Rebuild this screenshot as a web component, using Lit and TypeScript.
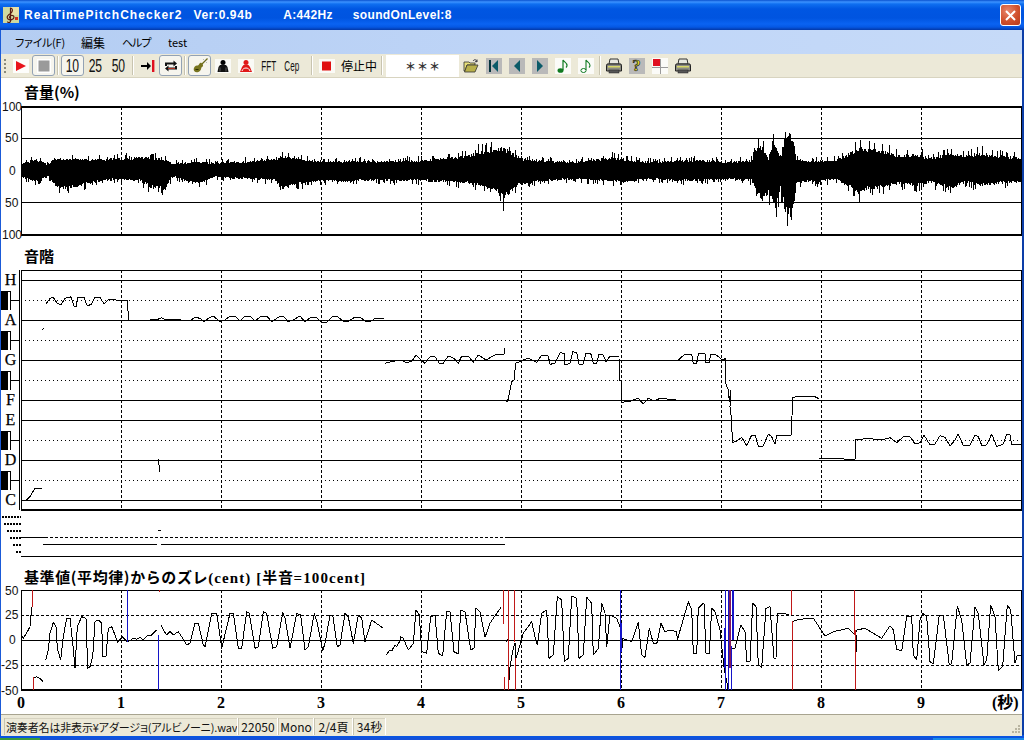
import { LitElement, html, css, svg } from "lit";
import { customElement } from "lit/decorators.js";

type Pt = number[];
const z = (ox: number, oy: number, a: number[]): Pt[] => {
  const r: Pt[] = [];
  for (let i = 0; i < a.length; i += 2) r.push([+(ox + a[i] / 3).toFixed(1), +(oy + a[i + 1] / 3).toFixed(1)]);
  return r;
};
const P = (...s: Pt[][]) => s.flat().map((p) => p.join(",")).join(" ");

const pitchTraces: string[] = [
  P(z(0, 240, [137,193,150,175,160,172,172,190,182,195,195,175,212,170,222,198,230,198,232,172,252,172,262,198,275,192,285,172,300,172,312,192,325,180,340,177,355,182,383,182,385,240,388,243])),
  P(z(0, 240, [127,268,131,265])),
  P(z(0, 240, [450,239,470,239,485,233,495,238,540,239,555,243,570,242,585,232,600,235,612,245,625,235,640,228,660,245,675,240,690,228,705,228,720,243,735,228,750,228,765,243,785,228,800,228,815,245,835,232,850,228,865,245,880,240,900,228]),
    [[305,322],[311,317],[316,317],[321,322],[327,322],[333,316],[338,317],[343,321],[349,321],[355,317],[360,317],[365,321],[371,321],[376,318],[384,319]]),
  P(z(380, 330, [15,100,30,96,60,90,78,97,95,95,108,75,125,92,135,100,150,80,165,80,178,100,190,100,205,78,222,85,235,100,245,78,265,78,280,97,295,75,318,90,345,75,372,72,373,55])),
  P(z(380, 330, [378,213,383,213,395,155,402,150,407,100,425,92,445,84,470,97,485,75,505,78,510,103,525,100,540,68,552,70,555,105,570,100,578,65,590,68,597,103,610,102,618,70,632,70,640,100,650,100,657,72,670,75,678,95,690,78,717,80,718,150,723,150,723,218,745,213,752,213,775,205,790,222,805,205,822,213,840,205,860,207,888,208])),
  P(z(380, 330, [895,90,915,72,935,72,940,100,950,100,955,72]),
    z(700, 340, [0,40,15,42,18,68,28,68,32,42,45,42,65,58,72,60,75,55,75,125,85,150,88,185,92,150,90,200,95,240,97,307,107,305,125,292,140,317,155,285,165,285,175,318,190,318,205,282,215,290,225,313,230,287,275,285,276,228,278,172,290,170,345,170,358,177])),
  P(z(700, 340, [358,355,465,358,468,298,510,296,545,300,570,293,590,308,610,290,630,290,645,312,660,308,672,285,690,315,705,312,720,287,735,292,750,318,765,300,775,282,790,316,810,316,825,285,835,290,845,316,860,315,875,282,890,320,910,312,920,282,930,285,935,315,965,312])),
  P(z(0, 420, [65,240,80,240,90,230,105,205,125,205])),
  P(z(0, 420, [475,118,478,140,480,155])),
];

const centTraces: string[] = [
  P(z(0, 580, [65,165,70,175,85,150,90,140,95,80])),
  P(z(0, 580, [100,295,110,290,120,295,130,305])),
  P(z(0, 580, [137,240,145,210,150,160,160,127,168,140,172,205,182,240,190,170,200,115,210,115,220,205,225,265,232,140,245,110,258,115,263,265,270,260,278,230,285,125,295,120,305,130,308,230,318,228,325,145,335,140,345,165,352,187,368,170,380,185,385,185,400,175,410,178,420,172,430,180,445,165,455,165,470,150])),
  P(z(0, 580, [483,135,490,150,500,165,510,155,520,165,535,155,545,170,560,195,570,190,585,130,595,130,610,195,615,200,635,100,650,100,665,205,690,100,700,100,715,205,725,205,740,95,748,100,765,205,775,200,790,95,800,100,818,205,830,200,848,98,855,115,870,205,890,100,902,105,915,210,925,200,943,100,952,130,968,212,975,190,990,105,998,105,1012,200,1020,195,1035,100,1045,110,1060,190,1075,105,1085,115,1095,185,1115,120,1150,145])),
  P(z(0, 580, [1158,225,1170,210,1175,213,1185,195,1190,200,1200,182]),
    z(400, 580, [0,170,10,175,25,210,40,190,48,90,58,105,65,215,80,220,92,110,105,105,115,220,128,228,140,95,150,95,162,215,175,222,182,90,195,95,212,210,222,205,228,85,240,95,255,172,270,130,280,115,303,82])),
  P(z(400, 580, [318,185,325,178])),
  P(z(400, 580, [325,330,330,260,340,205,345,190,345,245,360,195,370,160,395,125,405,170,412,195,425,100,440,90,447,235,460,225,472,50,485,60,493,245,505,235,515,48,530,55,537,235,550,225,560,52,575,70,580,225,595,205,605,70,615,100,620,200,630,105,650,115,660,140,665,215,668,175,680,180,695,185,715,128,725,225,735,232,748,145,760,190,770,192,783,130,795,155,810,150,830,155,832,180,865,65,875,90,880,220,890,222,895,85,910,70]),
    z(700, 580, [12,72,18,220,28,222,35,85,45,95,60,150,72,262,85,330])),
  P(z(700, 580, [95,205,105,205,122,135,135,155,140,245,150,245,158,70,168,80,175,255,185,262,198,85,210,80,222,235,228,235,232,100,268,103])),
  P(z(700, 580, [278,125,295,118,340,115,350,130,375,168,400,155,445,145,465,165,470,150,495,145,545,175,570,137,580,150,590,208,605,213,620,110,635,110,640,225,650,240,660,120,668,100,680,110,690,245,700,252,718,105,730,105,748,255,755,250,772,78,785,120,800,255,810,250,825,82,835,100,852,255,860,240,872,75,885,110,895,272,908,258,922,75,932,90,945,250,952,225,965,228])),
  P(z(700, 580, [468,165,468,215])),
];

const RED = "#c01818";
const BLUE = "#1414c8";
const PUR = "#801860";
const centBars: [number, number, number, string, number][] = [
  [32.5, 590, 607, RED, 1], [33.5, 677, 690, RED, 1], [127.5, 590, 642, BLUE, 1], [158.5, 635, 690, BLUE, 1], [159.5, 590, 592, RED, 1],
  [503.5, 590, 624, RED, 1], [504.5, 677, 690, RED, 1], [508.5, 590, 639, RED, 1], [508.5, 639, 690, RED, 1], [514.5, 590, 642, RED, 1], [515.5, 658, 690, RED, 1],
  [620.5, 590, 690, BLUE, 1], [620.5, 623, 652, BLUE, 2],
  [725.5, 590, 690, BLUE, 1], [724.5, 628, 668, BLUE, 2], [728.5, 590, 690, BLUE, 1], [729.5, 590, 668, PUR, 2],
  [732.5, 590, 640, BLUE, 2], [731.5, 646, 690, BLUE, 1],
  [791.5, 590, 615, RED, 1], [792.5, 621, 690, RED, 1], [854.5, 590, 635, RED, 1], [855.5, 630, 690, RED, 1],
];

const env: number[][] = [
  [21,8,8],[35,13,13],[48,7,7],[54,14,17],[60,14,22],[85,13,16],[105,13,12],[120,14,10],[140,15,12],[150,15,20],[165,13,22],[172,8,7],
  [195,10,16],[215,9,8],[250,11,10],[275,14,12],[282,17,22],[295,14,16],[320,11,12],[345,11,13],[375,11,11],[400,11,12],[420,12,12],
  [445,15,13],[465,16,14],[480,22,18],[495,24,22],[503,27,33],[520,14,16],[545,11,12],[575,10,10],[610,15,13],[625,13,14],[650,10,10],
  [680,12,12],[700,12,12],[730,10,10],[752,12,12],[756,26,28],[762,27,34],[768,14,26],[772,33,38],[776,30,42],[780,14,20],[785,43,48],[790,42,52],[794,30,34],
  [796,12,14],[820,11,13],[835,12,10],[850,20,20],[858,26,26],[866,25,22],[880,24,20],[900,16,15],[915,20,18],[930,14,14],[950,20,20],[965,17,14],[980,20,18],[1000,17,15],[1020,15,14],
];
const envAt = (x: number, k: 1 | 2) => {
  for (let i = 1; i < env.length; i++) {
    if (x <= env[i][0]) {
      const a = env[i - 1], b = env[i];
      return a[k] + ((b[k] - a[k]) * (x - a[0])) / (b[0] - a[0]);
    }
  }
  return 10;
};
const wavePath = () => {
  let s = 12345;
  const rnd = () => { s = (s * 1664525 + 1013904223) >>> 0; return (s >>> 8) / 16777216; };
  const amp = (e: number) => {
    const base = e * (0.72 + rnd() * 0.2);
    return rnd() > 0.82 ? e * (1 + rnd() * 0.25) : base;
  };
  let d = "";
  for (let x = 22; x < 1021; x++) {
    d += `M${x + 0.5} ${(170.5 - amp(envAt(x, 1))).toFixed(0)}V${(170.5 + amp(envAt(x, 2))).toFixed(0)}`;
  }
  return d;
};

const gx = [121, 221, 321, 421, 521, 621, 721, 821, 921];
const vDash = (y1: number, y2: number) =>
  gx.map((x) => svg`<line class="dash" x1=${x + 0.5} x2=${x + 0.5} y1=${y1} y2=${y2}></line>`);
const hLine = (y: number, cls = "solid", x1 = 21, x2 = 1022) =>
  svg`<line class=${cls} x1=${x1} x2=${x2} y1=${y + 0.5} y2=${y + 0.5}></line>`;

const icon = (body: unknown) => html`<svg class="ic" viewBox="0 0 16 16" width="16" height="16">${body}</svg>`;
const I = {
  play: svg`<rect width="16" height="14" y="1" fill="#fdfdfb"></rect><polygon points="3,3 13,8 3,13" fill="#e8141c"></polygon>`,
  stop: svg`<rect x="1" y="1" width="14" height="14" fill="#fff"></rect><rect x="2.5" y="2.5" width="11" height="11" fill="#9a9a9a"></rect>`,
  jump: svg`<path d="M1 7h6V4l4 4-4 4V9H1z" fill="#000"></path><rect x="12" y="2" width="2.4" height="12" fill="#e01020"></rect>`,
  rep: svg`<path d="M2 8V4.500h8.500V2.500l3.500 3-3.500 3V6.500H4V8z" fill="#111"></path><path d="M14 8v3.500H5.500v2L2 10.500l3.500-3v2H12V8z" fill="#111"></path><rect x="5" y="10" width="7" height="1" fill="#b03020"></rect>`,
  violin: svg`<path d="M15.500 .5 9 7" stroke="#6a6a1a" stroke-width="1.200"></path><path d="M9.500 5c.8.800 1.800 1.800 1.500 3-.3 1-1.500.7-1.700 2-.3 2-1.500 4-3.800 4.300C3 14.600 1.500 13 1.700 11c.2-2.300 2.300-4 3.800-3.500 1 .3 1.200-1 1.700-1.500.5-.5 1.300-1.500 2.300-1z" fill="#77741f"></path><path d="M11 1 15 5" stroke="#b8b8b0"></path><path d="M3.500 11.500h3" stroke="#2c2c00"></path>`,
  p1: svg`<rect y="1" width="16" height="14" fill="#fafaf6"></rect><circle cx="8" cy="4.500" r="2.500" fill="#000"></circle><path d="M5 7h6l1.500 2 1 5H2.500l1-5z" fill="#111"></path><path d="M5 9.500v4M11 9.500v4" stroke="#888" stroke-width=".6"></path>`,
  p2: svg`<rect y="1" width="16" height="14" fill="#fafaf6"></rect><circle cx="8" cy="4.500" r="2.500" fill="#e01818"></circle><path d="M5.500 7h5l1.500 2 2 5H2l2-5z" fill="#e01818"></path><path d="M4 13c1-4 7-4 8 0" stroke="#fff" fill="none"></path>`,
  sq: svg`<rect y="1" width="16" height="14" fill="#fafaf6"></rect><rect x="3" y="3.500" width="9" height="9" fill="#e01010"></rect>`,
  folder: svg`<path d="M1 4h5l1 1h5v2H4L2 13H1z" fill="#e8e07a" stroke="#333" stroke-width=".8"></path><path d="M4 7h11l-3 7H1.500z" fill="#b8b04a" stroke="#333" stroke-width=".8"></path><path d="M10 3c1.500-2 3-1.500 4 .5M14 1.500v2.200h-2" fill="none" stroke="#223" stroke-width=".9"></path>`,
  first: svg`<rect width="16" height="16" fill="#b9b9b9"></rect><rect x="3" y="2" width="2" height="12" fill="#04343c"></rect><polygon points="12,2 6,8 12,14" fill="#0a5a68"></polygon>`,
  prev: svg`<rect width="16" height="16" fill="#b9b9b9"></rect><polygon points="11,2 5,8 11,14" fill="#0a5a68"></polygon>`,
  next: svg`<rect width="16" height="16" fill="#b9b9b9"></rect><polygon points="5,2 11,8 5,14" fill="#0a5a68"></polygon>`,
  note1: svg`<rect width="16" height="16" fill="#fbfbf8"></rect><ellipse cx="5.500" cy="12.500" rx="3" ry="2.300" fill="#107a20"></ellipse><path d="M8 12V2c1 2 4 2.500 4 5.500 0 1-.5 1.500-1 2" stroke="#107a20" fill="none" stroke-width="1.200"></path>`,
  note2: svg`<rect width="16" height="16" fill="#fbfbf8"></rect><ellipse cx="5.500" cy="12.500" rx="2.600" ry="2" fill="#fff" stroke="#107a20"></ellipse><path d="M8 12V2c1 2 4 2.500 4 5.500 0 1-.5 1.500-1 2" stroke="#107a20" fill="none" stroke-width="1.100"></path>`,
  printer: svg`<path d="M4 1h8l1 5H3z" fill="#e8e8e0" stroke="#333"></path><path d="M1 6h14l.5 2v5H.5V8z" fill="#8c8c84" stroke="#222"></path><rect x="2" y="8" width="12" height="1.500" fill="#d8d868"></rect><rect x="3" y="12" width="10" height="3" fill="#555" stroke="#222" stroke-width=".5"></rect>`,
  cross: svg`<rect width="16" height="16" fill="#fbfbf8"></rect><path d="M0 9.500h16M8.500 1v15" stroke="#9a9a9a"></path><rect x="1" y="1" width="7" height="7" fill="#e01020"></rect>`,
  clef: svg`<rect width="16" height="16" fill="#cfd8a0"></rect><rect x="8" y="0" width="8" height="8" fill="#e8e0a8"></rect><path d="M7 1c3 0 3 3 1 5-3 2-5 4-3 6 2 1.500 6 1 6-2 0-2-4-2.500-4.500 0-.2 1 .8 1.600 1.500 1.300M7.500 1v13c0 2-3 2-3 .5" fill="none" stroke="#5a1a10" stroke-width="1.200"></path><rect x="12" y="10" width="3" height="3" fill="#d03020"></rect>`,
};

@customElement("app-root")
export class AppRoot extends LitElement {
  static styles = css`
    :host { display: block; width: 1024px; height: 740px; overflow: hidden; background: #fff;
      font-family: "Noto Sans CJK JP", "Liberation Sans", sans-serif; color: #000; }
    .title { height: 30px; display: flex; align-items: center; color: #fff; font-family: "Liberation Sans", sans-serif; font-weight: 700; font-size: 12px; letter-spacing: .6px;
      background: linear-gradient(#0a52cf 0, #3c92ff 2px, #0f6ff0 4px, #0056e2 9px, #0054e0 18px, #0a63f2 24px, #0558e4 27px, #0338a8 30px); }
    .appicon { margin-left: 3px; margin-right: 5px; display: block; }
    .t1 { letter-spacing: 1.05px; }
    .t2 { margin-left: 11px; }
    .t3 { margin-left: 31px; letter-spacing: .3px; }
    .t4 { margin-left: 20px; letter-spacing: .35px; }
    .close { margin-left: auto; margin-right: 3px; width: 19px; height: 20px; border: 1px solid #fff; border-radius: 3px; background: radial-gradient(circle at 35% 30%, #e8866c, #d0502c 55%, #b83a1c); display: flex; align-items: center; justify-content: center; }
    .body { border-left: 1px solid #1a5ad8; border-right: 2px solid #0c3ea8; height: 705px; display: flex; flex-direction: column; }
    .menu { height: 24px; background: linear-gradient(90deg, #b4cdf2, #c0d6f8 60%, #c6daf8); display: flex; align-items: center; font-size: 11px; font-feature-settings: "palt"; padding-left: 14px; flex: none; }
    .menu span { display: block; flex: none; }
    .m1 { width: 66px; letter-spacing: -.25px; }
    .m2 { width: 41px; font-size: 12px; }
    .m3 { width: 46px; letter-spacing: -1px; }
    .tb { height: 23px; flex: none; display: flex; align-items: center; background: #ece9d8; border-bottom: 1px solid #d8d4c0; font-feature-settings: "palt"; }
    .grip { width: 8px; height: 19px; display: flex; justify-content: center; }
    .btn { width: 23px; height: 21px; flex: none; display: flex; align-items: center; justify-content: center; box-sizing: border-box; }
    .on { border: 1px solid #93a2b4; border-radius: 3px; background: #f6f5ee; }
    .ic { display: block; }
    .sep { width: 6px; height: 19px; flex: none; display: flex; justify-content: center; }
    .sep::before { content: ""; width: 1px; background: #c8c4b0; border-right: 1px solid #fff; }
    .sep5 { width: 5px; }
    .far { margin-left: 6px; }
    .num { font: 19px "Liberation Sans", sans-serif; transform: scaleX(.64); letter-spacing: -.3px; color: #111; white-space: nowrap; }
    .sm { font: 15px "Liberation Sans", sans-serif; transform: scaleX(.54); color: #111; white-space: nowrap; }
    .lab { padding-left: 3px; font-size: 12px; flex: none; width: 38px; white-space: nowrap; }
    .field { margin-left: 1px; width: 73px; height: 22px; background: #fff; flex: none; display: flex; align-items: center; justify-content: center; font-size: 11px; font-weight: 700; gap: 3px; color: #333; }
    .help { width: 16px; height: 16px; background: #b9b9b9; display: flex; align-items: center; justify-content: center; font: 700 17px/16px "Liberation Serif", serif; color: #e8e020; -webkit-text-stroke: .7px #222; }
    h2 { margin: 0; padding-left: 23px; font-size: 15px; font-weight: 700; box-sizing: border-box; font-family: "Noto Sans CJK JP", sans-serif; line-height: 17px; white-space: nowrap; flex: none; }
    .h1 { height: 24px; padding-top: 5px; }
    .h3 { height: 28px; padding-top: 7px; }
    .h4 { height: 28px; padding-top: 10px; letter-spacing: .6px; }
    .h4 b { font: 700 15px "Liberation Serif", serif; letter-spacing: 1.1px; }
    .plot { display: block; flex: none; overflow: visible; }
    .solid { stroke: #000; stroke-width: 1; shape-rendering: crispEdges; }
    .thick { stroke: #000; stroke-width: 2; shape-rendering: crispEdges; }
    .dash { stroke: #000; stroke-width: 1; stroke-dasharray: 3 2; shape-rendering: crispEdges; }
    .dot { stroke: #000; stroke-width: 1; stroke-dasharray: 1 3; shape-rendering: crispEdges; }
    .hdash { stroke: #000; stroke-width: 1; stroke-dasharray: 3 2; shape-rendering: crispEdges; }
    .rows { stroke: #000; stroke-width: 2; stroke-dasharray: 2 1; shape-rendering: crispEdges; }
    .trace { fill: none; stroke: #000; stroke-width: 1; shape-rendering: crispEdges; stroke-linejoin: round; }
    .wave { fill: none; stroke: #000; stroke-width: 1; shape-rendering: crispEdges; }
    .yl { font: 12px "Liberation Sans", sans-serif; fill: #111; }
    .key { font: 16px "Liberation Serif", serif; fill: #000; stroke: #000; stroke-width: .25px; }
    .xl { font: 700 16px "Liberation Serif", serif; fill: #000; }
    .xs { font: 700 16px "Liberation Serif", "Noto Sans CJK JP", serif; fill: #000; }
    .status { flex: 1; background: #ece9d8; display: flex; align-items: stretch; font-size: 12px; font-feature-settings: "palt"; padding: 3px 0 1px 3px; color: #111; border-top: 1px solid #a8a490; white-space: nowrap; }
    .status div { border-right: 1px solid #fff; border-left: 1px solid #c8c4b0; box-shadow: inset 0 1px 0 #d6d2c0; display: flex; align-items: center; justify-content: center; box-sizing: border-box; flex: none; }
    .status .s1 { width: 234px; font-size: 11px; letter-spacing: -.15px; justify-content: flex-start; padding-left: 1px; overflow: hidden; }
    .s2 { width: 40px; } .s3 { width: 36px; } .s4 { width: 39px; } .s5 { width: 33px; }
    .status .sgrip { margin-left: auto; border: 0; box-shadow: none; align-items: flex-end; margin-right: 1px; }
    .foot { height: 5px; flex: none; display: flex; flex-direction: column; background: #0a54e0; }
    .bar { height: 2px; margin-top: 3px; display: flex; background: #1a5ce0; }
    .bar i { display: block; }
    .start { width: 40px; background: #3a9a3a; }
    .mid { flex: 1; background: #1550d8; }
    .tray { width: 91px; background: #1a8ae8; }
  `;

  render() {
    return html`
      <div class="title">
        <svg class="appicon" viewBox="0 0 16 16" width="16" height="16">${I.clef}</svg>
        <span class="t1">RealTimePitchChecker2</span><span class="t2">Ver:0.94b</span><span class="t3">A:442Hz</span><span class="t4">soundOnLevel:8</span>
        <div class="close"><svg viewBox="0 0 13 13" width="13" height="13"><path d="M2 2l9 9M11 2l-9 9" stroke="#fff" stroke-width="2"></path></svg></div>
      </div>
      <div class="body">
        <div class="menu"><span class="m1">ファイル(F)</span><span class="m2">編集</span><span class="m3">ヘルプ</span><span>test</span></div>
        <div class="tb">
          <div class="grip"><svg width="2" height="19"><path d="M1 3v14" stroke="#8a8a7a" stroke-width="2" stroke-dasharray="2 2"></path></svg></div>
          <div class="btn">${icon(I.play)}</div>
          <div class="btn on">${icon(I.stop)}</div>
          <div class="sep"></div>
          <div class="btn on"><span class="num">10</span></div>
          <div class="btn"><span class="num">25</span></div>
          <div class="btn"><span class="num">50</span></div>
          <div class="sep"></div>
          <div class="btn">${icon(I.jump)}</div>
          <div class="btn on">${icon(I.rep)}</div>
          <div class="sep"></div>
          <div class="btn on">${icon(I.violin)}</div>
          <div class="btn">${icon(I.p1)}</div>
          <div class="btn">${icon(I.p2)}</div>
          <div class="btn"><span class="sm">FFT</span></div>
          <div class="btn"><span class="sm">Cep</span></div>
          <div class="sep far"></div>
          <div class="btn">${icon(I.sq)}</div>
          <div class="lab">停止中</div>
          <div class="sep"></div>
          <div class="field"><span>＊</span><span>＊</span><span>＊</span></div>
          <div class="btn">${icon(I.folder)}</div>
          <div class="btn">${icon(I.first)}</div>
          <div class="btn">${icon(I.prev)}</div>
          <div class="btn">${icon(I.next)}</div>
          <div class="btn">${icon(I.note1)}</div>
          <div class="btn">${icon(I.note2)}</div>
          <div class="sep sep5"></div>
          <div class="btn">${icon(I.printer)}</div>
          <div class="btn"><div class="help">?</div></div>
          <div class="btn">${icon(I.cross)}</div>
          <div class="btn">${icon(I.printer)}</div>
        </div>
        <h2 class="h1">音量(%)</h2>
        ${this.volume()}
        <h2 class="h3">音階</h2>
        ${this.pitch()}
        <h2 class="h4">基準値(平均律)からのズレ<b>(cent) [</b>半音<b>=100cent]</b></h2>
        ${this.cents()}
        <div class="status">
          <div class="s1">演奏者名は非表示¥アダージョ(アルビノーニ).wav</div>
          <div class="s2">22050</div><div class="s3">Mono</div><div class="s4">2/4頁</div><div class="s5">34秒</div>
          <div class="sgrip"><svg width="12" height="12"><path d="M9 2h2v2H9zM6 5h2v2H6zM9 5h2v2H9zM3 8h2v2H3zM6 8h2v2H6zM9 8h2v2H9z" fill="#b8b4a0"></path></svg></div>
        </div>
      </div>
      <div class="foot"><div class="bar"><i class="start"></i><i class="mid"></i><i class="tray"></i></div></div>
    `;
  }

  volume() {
    return html`<svg class="plot" width="1021" height="138" viewBox="1 102 1021 138">
      ${hLine(138)}${hLine(202)}${hLine(170)}
      ${vDash(107, 235)}
      <line class="solid" x1="21.500" x2="21.500" y1="106" y2="236"></line>
      <line class="solid" x1="1021.500" x2="1021.500" y1="106" y2="236"></line>
      ${hLine(106.5, "thick")}${hLine(234.5, "thick")}
      <path class="wave" d=${wavePath()}></path>
      <text class="yl" x="2" y="111">100</text><text class="yl" x="5" y="142">50</text><text class="yl" x="9" y="175">0</text><text class="yl" x="5" y="207">50</text><text class="yl" x="2" y="239">100</text>
    </svg>`;
  }

  pitch() {
    const solids = [280, 320, 360, 400, 420, 460, 500];
    const dots = [300, 340, 380, 440, 480];
    const keys: [string, number][] = [["H", 285], ["A", 325], ["G", 365], ["F", 405], ["E", 425], ["D", 465], ["C", 505]];
    const rows: [number, number][] = [[516, 2], [523, 4], [530, 7], [537, 10], [544, 13], [551, 16]];
    return html`<svg class="plot" width="1021" height="290" viewBox="1 268 1021 290">
      ${solids.map((y) => hLine(y))}
      ${dots.map((y) => hLine(y, "dot"))}
      ${vDash(270, 509)}
      ${hLine(270)}${hLine(509, "thick")}
      <line class="solid" x1="19.500" x2="19.500" y1="270" y2="510"></line>
      <line class="solid" x1="21.500" x2="21.500" y1="270" y2="510"></line>
      <line class="solid" x1="1021.500" x2="1021.500" y1="270" y2="510"></line>
      ${keys.map(([k, y]) => svg`<text class="key" x="10.500" y=${y} text-anchor="middle">${k}</text>`)}
      ${dots.map((y) => svg`
        <rect x="1" y=${y - 9} width="7" height="19" fill="#000"></rect>
        <rect x="1" y=${y - 9} width="10" height="1" fill="#000"></rect>
        <rect x="10" y=${y - 9} width="1" height="19" fill="#000"></rect>
        <rect x="10" y=${y} width="10" height="1" fill="#000"></rect>`)}
      ${pitchTraces.map((p) => svg`<polyline class="trace" points=${p}></polyline>`)}
      ${rows.map(([y, x]) => svg`<line class="rows" x1=${x} x2="21" y1=${y + 0.5} y2=${y + 0.5}></line>`)}
      ${hLine(537, "solid", 21, 45)}${hLine(537, "hdash", 45, 505)}${hLine(537, "solid", 505, 1022)}
      ${hLine(544, "solid", 43, 157)}${hLine(544, "solid", 161, 505)}
      ${hLine(530, "solid", 158, 161)}
      ${hLine(556)}
    </svg>`;
  }

  cents() {
    const yl: [string, number, number][] = [["50", 5, 595], ["25", 5, 619], ["0", 9, 644], ["-25", 1, 669], ["-50", 1, 695]];
    return html`<svg class="plot" width="1021" height="128" viewBox="1 586 1021 128">
      ${hLine(615, "hdash")}${hLine(665, "hdash")}${hLine(640)}
      ${vDash(590, 690)}
      ${hLine(590)}${hLine(689.5, "thick")}
      <line class="solid" x1="21.500" x2="21.500" y1="590" y2="690"></line>
      <line class="solid" x1="1021.500" x2="1021.500" y1="590" y2="690"></line>
      ${centTraces.map((p) => svg`<polyline class="trace" points=${p}></polyline>`)}
      ${centBars.map(([x, a, b, c, w]) => svg`<line x1=${x} x2=${x} y1=${a} y2=${b} stroke=${c} stroke-width=${w} shape-rendering="crispEdges"></line>`)}
      ${yl.map(([t, x, y]) => svg`<text class="yl" x=${x} y=${y}>${t}</text>`)}
      ${[0, 1, 2, 3, 4, 5, 6, 7, 8, 9].map((n) => svg`<text class="xl" x=${21 + n * 100} y="708" text-anchor="middle">${n}</text>`)}
      <text class="xs" x="992" y="708">(秒)</text>
    </svg>`;
  }
}
